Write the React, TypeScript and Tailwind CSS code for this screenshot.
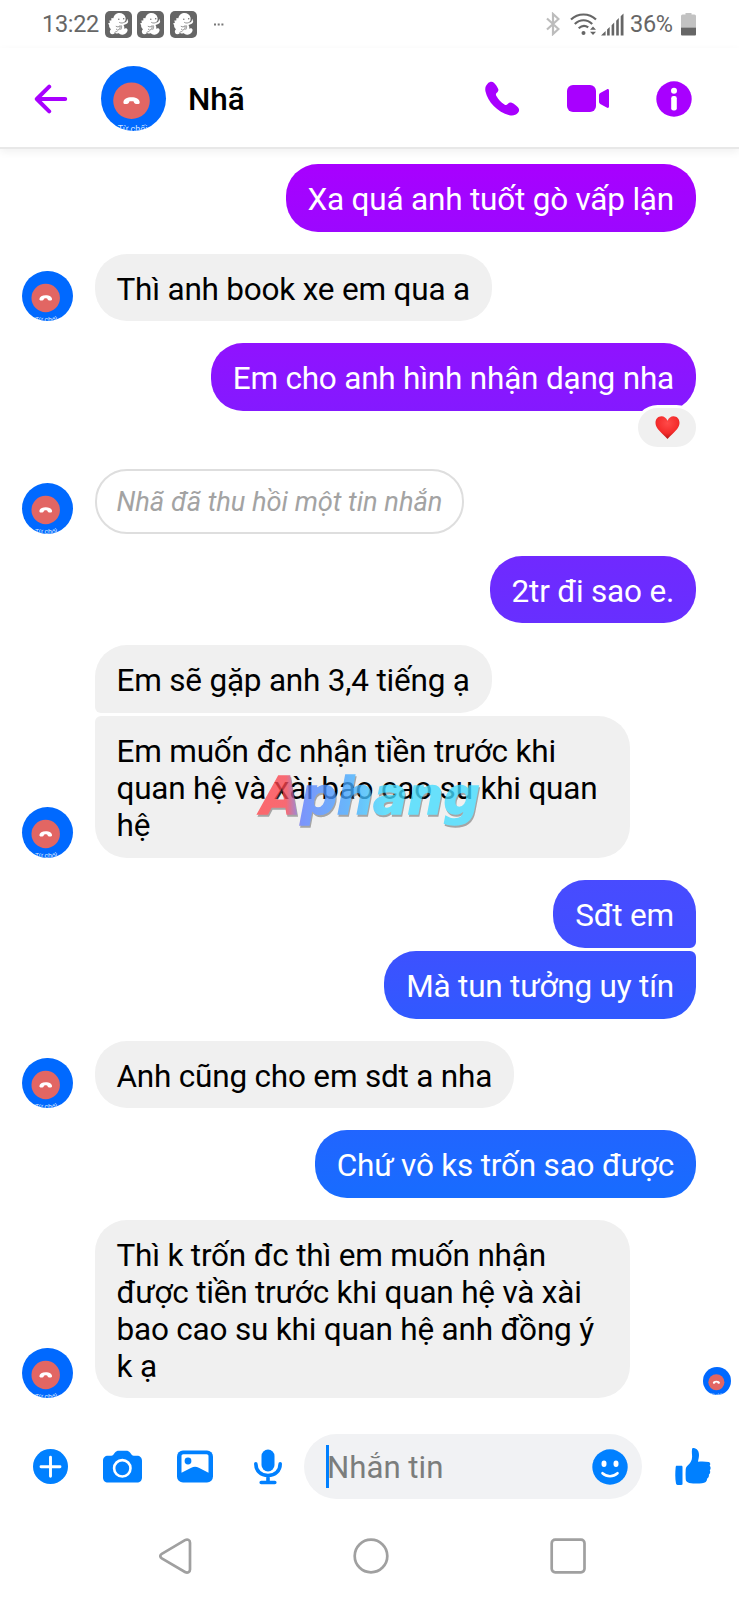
import React from "react";

function Avatar({ className }: { className: string }) {
  return (
    <svg viewBox="0 0 65 65" className={`shrink-0 overflow-hidden rounded-full bg-[#0069ff] ${className}`}>
      <circle cx="30.5" cy="34.7" r="18.3" fill="#e26663" />
      <path
        d="M22.400 36.200c.3-3.200 3.500-4.900 8.100-4.900s7.900 1.700 8.200 4.900c.1 1.400-.9 2-2.500 1.900-2-.1-3-.6-3.300-1.800-.1-.6-.3-.9-.8-1-1.200-.2-2.100-.2-3.200 0-.5.1-.7.400-.8 1-.3 1.200-1.300 1.700-3.300 1.800-1.600.1-2.500-.5-2.400-1.900z"
        fill="#fff"
      />
      <text x="16.800" y="66" fontSize="9" fill="#d8e8ff" fontFamily="Roboto, sans-serif">Từ chối</text>
    </svg>
  );
}

function DinoIcon() {
  return (
    <svg viewBox="0 0 27 27" className="h-[27px] w-[27px]">
      <rect width="27" height="27" rx="5" fill="#666" />
      <path
        d="M12.500 2.300c3.600-1 7.200.8 8 4.200.4 2-.1 4-1.500 5.300 1.200-.1 2-.6 2.500-1.500l.8-2.500.9 3c-.4 1.500-1.500 2.400-3.200 2.700l-1.500.5c.8 1.200 1 2.400.7 3.800 1.200-.9 2.800-.6 3.300.7.5 2-1.500 4.300-4 5-2 .5-3.700 0-4.700-1.200-1.300.3-2.700.1-3.800-.4-1.500 1.500-3.700 1.700-4.700.3-.9-1.500-.4-2.900.7-3.900-1.500-1-2.100-2.500-1.900-4.200L3 12.600l1.900-.8-.6-2.300 2-.1.100-2.300 1.900.1c.6-2.500 2-4.300 4.200-4.900z"
        fill="#fff"
      />
      <circle cx="13.800" cy="8.200" r=".7" fill="#666" />
      <circle cx="18.700" cy="7.800" r=".7" fill="#666" />
      <path d="M14.200 11.300c2 1.200 4 .9 5.500-.5M10.800 15.200l2.200.8 2.300-1.300-.4 3.200-2.200 1.300-1.700-1.300M16.500 14.500c.3 1.500 0 3-.9 4.300M9.500 21.800c.8-1 1.600-1.400 2.800-1.200" fill="none" stroke="#666" strokeWidth=".7" />
    </svg>
  );
}

function StatusBar() {
  return (
    <div className="flex h-[48px] items-center pl-[42px] pr-[43px] text-[23.500px] tracking-[-0.3px] text-[#666]">
      <span className="w-[63px] pt-[1px]">13:22</span>
      <div className="flex gap-[5.400px]">
        <DinoIcon />
        <DinoIcon />
        <DinoIcon />
      </div>
      <svg viewBox="0 0 10 3" className="ml-[17px] h-[3px] w-[10px]" fill="#777">
        <rect width="2" height="2" y=".5" />
        <rect x="3.700" width="2" height="2" y=".5" />
        <rect x="7.400" width="2" height="2" y=".5" />
      </svg>
      <div className="ml-auto flex items-center">
        <svg viewBox="0 0 14 24" className="mr-[10px] h-[24px] w-[14px]" fill="none" stroke="#bcbcbc" strokeWidth="2.200">
          <path d="M1 6.500 12.500 17 7 22V2l5.500 5L1 17.500" />
        </svg>
        <svg viewBox="0 0 27 24" className="mr-[4px] h-[24px] w-[27px]" fill="none" stroke="#666" strokeWidth="2.200">
          <path d="M1 7.500C8 .8 19 .8 26 7.500M4.800 12C10 7 17 7 22.200 12M8.700 16.200c3-2.700 6.700-3 9.500-.8" />
          <circle cx="13.500" cy="21" r="2" fill="#666" stroke="none" />
          <path d="m20 17.800 3-3.300 3 3.300zM20 19.700l3 3.300 3-3.300z" fill="#666" stroke="none" />
        </svg>
        <svg viewBox="0 0 23 23" className="mr-[6px] h-[23px] w-[23px]" fill="#666">
          <path d="M0 22.500 4.600 18v4.500zM6.100 16.600l2.600-2.600v8.500H6.100zM10.600 12.200l2.600-2.600v12.900h-2.600zM15.200 7.700l2.600-2.600v17.400h-2.600zM19.700 3.300 22.500.500v22h-2.800z" />
        </svg>
        <span className="w-[43px] whitespace-nowrap pt-[1px]">36%</span>
        <svg viewBox="0 0 15 23" className="ml-[8px] h-[23px] w-[15px]">
          <path d="M4.500 0h6v1.500H13.500a1.500 1.500 0 0 1 1.500 1.500V14.500H0V3a1.500 1.500 0 0 1 1.500-1.500h3z" fill="#c2c2c2" />
          <path d="M0 14.500h15V21.500a1 1 0 0 1-1 1H1a1 1 0 0 1-1-1z" fill="#666" />
        </svg>
      </div>
    </div>
  );
}

function Header() {
  return (
    <header className="relative z-10 flex h-[101px] items-center border-b-2 border-[#e8e8e8] bg-white pl-[34px] pr-[47px] pt-[2px] shadow-[0_3px_8px_rgba(0,0,0,0.06)]">
      <svg viewBox="0 0 34 30" className="h-[30px] w-[34px]" fill="none" stroke="#a800ff" strokeWidth="4" strokeLinecap="round" strokeLinejoin="round">
        <path d="M31.200 15H3M15.200 2.700 2.800 15l12.400 12.300" />
      </svg>
      <Avatar className="ml-[33px] h-[65px] w-[65px]" />
      <h1 className="ml-[22px] pt-[3px] text-[31.500px] font-medium leading-none text-black">Nhã</h1>
      <svg viewBox="0 0 35 35" className="ml-auto h-[35px] w-[35px]" fill="#a800ff">
        <path d="M3 2.200C4.800.4 7.300.2 8.900 1.700c1.900 1.800 3.500 4.200 4.300 6.200.6 1.600-.3 2.800-1.400 3.900-1 1-1.200 1.900-.4 3.200 2 3.500 4.500 6.200 8 8.400 1.400.9 2.300.6 3.300-.4 1.200-1.200 2.400-1.900 4-1.200 2.300 1 4.500 2.600 6.400 4.600 1.400 1.500 1.300 3.700-.1 5.300-2.100 2.500-5 3.300-8.700 2.500C12.500 31.300 2.600 20.500.5 10.500-.2 7 .5 4.700 3 2.200z" />
      </svg>
      <svg viewBox="0 0 42 27" className="ml-[47px] h-[27px] w-[42px]" fill="#a800ff">
        <rect width="29" height="27" rx="6" />
        <path d="M32 10.500c0-1.300.6-2.100 1.700-2.700l6-3.400c1.300-.7 2.300-.2 2.300 1.300v15.600c0 1.500-1 2-2.300 1.300l-6-3.400c-1.100-.6-1.700-1.400-1.700-2.700z" />
      </svg>
      <svg viewBox="0 0 36 36" className="ml-[47px] h-[36px] w-[36px]">
        <circle cx="18" cy="18" r="17.700" fill="#a800ff" />
        <circle cx="18" cy="9.700" r="3" fill="#fff" />
        <rect x="15.200" y="15" width="5.600" height="14.500" rx="2.300" fill="#fff" />
      </svg>
    </header>
  );
}

function Sent({ children, className }: { children: React.ReactNode; className: string }) {
  return (
    <div className={`relative mr-[43px] self-end whitespace-nowrap rounded-[32px] bg-linear-to-b px-[22px] pb-[13.500px] pt-[17px] text-white ${className}`}>
      {children}
    </div>
  );
}

function Received({ children, avatar = true, className = "", seen = false }: { children: React.ReactNode; avatar?: boolean; className?: string; seen?: boolean }) {
  return (
    <div className="flex items-end">
      <div className="w-[72.500px] shrink-0 pl-[22px]">{avatar && <Avatar className="h-[50.500px] w-[50.500px]" />}</div>
      <div className={`relative ml-[22px] whitespace-nowrap rounded-[32px] bg-[#f0f0f0] px-[22px] pb-[13.500px] pt-[17px] text-black ${className}`}>{children}</div>
      {seen && <Avatar className="mb-[3px] ml-auto mr-[8px] h-[28.500px] w-[28.500px]" />}
    </div>
  );
}

function Composer() {
  return (
    <div className="mt-[36px] flex h-[64.500px] items-center pl-[33px]">
      <svg viewBox="0 0 35 35" className="h-[35px] w-[35px]">
        <circle cx="17.500" cy="17.500" r="17.500" fill="#0080ff" />
        <path d="M17.500 8.300v19M8 17.800h19" stroke="#fff" strokeWidth="2.900" strokeLinecap="round" />
      </svg>
      <svg viewBox="0 0 39 33" className="ml-[35px] h-[33px] w-[39px]">
        <path d="M12 2.500C13 1.200 14.200.700 15.700.700h7.600c1.500 0 2.700.5 3.700 1.800l1.700 2.200c.6.700 1.200 1 2.100 1H34c3 0 5 2 5 5v16.800c0 3-2 5-5 5H5c-3 0-5-2-5-5V10.700c0-3 2-5 5-5h3.200c.9 0 1.500-.3 2.100-1z" fill="#0080ff" />
        <circle cx="19.300" cy="18.300" r="8.200" fill="none" stroke="#fff" strokeWidth="2.600" />
      </svg>
      <svg viewBox="0 0 36 33" className="ml-[35px] h-[33px] w-[36px]">
        <rect y=".5" width="36" height="32" rx="6" fill="#0080ff" />
        <path d="M4.500 6.200C4.500 5 5.200 4.300 6.400 4.300h23.200c1.200 0 1.900.7 1.900 1.900v16.500l-9.700-5c-2.500-1.300-5-1.300-7.500 0l-9.800 5z" fill="#fff" />
        <circle cx="11" cy="11" r="3.400" fill="#0080ff" />
      </svg>
      <svg viewBox="0 0 28 36" className="ml-[40.500px] h-[36px] w-[28px]">
        <rect x="7.500" y=".5" width="13" height="22" rx="6.500" fill="#0080ff" />
        <path d="M1.800 14.800c0 7 5 11.700 12.200 11.700s12.200-4.700 12.200-11.700M14 27v6.500M7.200 33.500h13.600" fill="none" stroke="#0080ff" strokeWidth="3.600" strokeLinecap="round" />
      </svg>
      <div className="ml-[22.500px] flex h-[64.500px] w-[338px] items-center rounded-full bg-[#f1f2f4] pl-[22px] pr-[14px] text-[31.200px] text-[#7b7d7c]">
        <span className="h-[43px] w-[3px] bg-[#0080ff]" />
        <span className="-ml-[2px] whitespace-nowrap pt-[3.500px]">Nhắn tin</span>
        <svg viewBox="0 0 36 36" className="ml-auto h-[36px] w-[36px]">
          <circle cx="18" cy="18" r="17.700" fill="#0080ff" />
          <ellipse cx="12" cy="14.800" rx="2.500" ry="3.200" fill="#fff" />
          <ellipse cx="24" cy="14.800" rx="2.500" ry="3.200" fill="#fff" />
          <path d="M10.500 24.200c4.500 4 10.500 4 15 0" fill="none" stroke="#fff" strokeWidth="2.600" strokeLinecap="round" />
        </svg>
      </div>
      <svg viewBox="0 0 36 37" className="ml-[33px] h-[37px] w-[36px]" fill="#0080ff">
        <path d="M1.700 17.800h4.600c.8 0 1.200.5 1.200 1.300v16.600c0 .8-.4 1.200-1.200 1.200H2.600c-.9 0-1.400-.4-1.600-1.300-.9-5.400-.9-11-.3-16.500.1-.9.400-1.300 1-1.300zM17 1.500C17.100.500 17.700 0 18.600.100c3.400.4 5.400 3 5.400 6.800 0 2.700-.7 4.400-1 6.800 3.600-.5 7.500-.4 10.700.4 1.600.5 2.100 2.200 1 3.700 1.200 1.400 1.300 3.200.1 4.500.8 1.600.5 3.200-.9 4.300.3 1.700-.2 3-1.700 3.900-.2 3.200-2 4.500-5.200 4.800-4.300.4-8.600.3-12.800-.4-2.300-.4-3.400-1.500-3.500-3.800-.2-3.300-.2-6.500 0-9.700.1-2 1-3.200 2.500-4.500 2.600-2.200 3.800-4.700 3.900-8.200 0-2.500-.5-4.500-.1-7.200z" />
      </svg>
    </div>
  );
}

function NavBar() {
  return (
    <nav className="mt-[39px] flex h-[36px] items-center pl-[158.500px]">
      <svg viewBox="0 0 33 36" className="h-[36px] w-[33px]" fill="none" stroke="#a0a0a0" strokeWidth="2.700" strokeLinejoin="round">
        <path d="M2.800 15.800 26 2.200c2.500-1.400 5-.3 5 2.600v26.600c0 2.900-2.500 4-5 2.600L2.800 20.400c-2-1.200-2-3.400 0-4.600z" />
      </svg>
      <svg viewBox="0 0 36 36" className="ml-[161.500px] h-[36px] w-[36px]" fill="none" stroke="#a0a0a0" strokeWidth="2.700">
        <circle cx="18" cy="18" r="16.300" />
      </svg>
      <svg viewBox="0 0 36 36" className="ml-[161px] h-[36px] w-[36px]" fill="none" stroke="#a0a0a0" strokeWidth="2.700">
        <rect x="1.700" y="1.700" width="32.800" height="32.600" rx="3.500" />
      </svg>
    </nav>
  );
}

export default function App() {
  return (
    <div className="h-[1600px] w-[739px] overflow-hidden bg-white font-['Roboto','Noto_Sans',sans-serif]">
      <StatusBar />
      <Header />
      <main className="flex flex-col gap-[22.100px] pt-[15px] text-[31.500px] leading-[37px] tracking-[-0.200px]">
        <Sent className="from-[#a800ff] to-[#9c07ff]">Xa quá anh tuốt gò vấp lận</Sent>
        <Received>Thì anh book xe em qua a</Received>
        <Sent className="mb-[36px] from-[#9012ff] to-[#8419ff]">
          Em cho anh hình nhận dạng nha
          <span className="absolute -bottom-[39px] -right-[3px] flex h-[45px] w-[64px] items-center justify-center rounded-[23px] border-[3px] border-white bg-[#f0f0f0]">
            <svg viewBox="0 0 25 23" className="h-[23px] w-[25px]">
              <defs>
                <radialGradient id="heart" cx=".5" cy=".3" r=".75">
                  <stop offset="0" stopColor="#ff4a48" />
                  <stop offset=".6" stopColor="#f42b2b" />
                  <stop offset="1" stopColor="#a51413" />
                </radialGradient>
              </defs>
              <path d="M12.500 4.800C11.200 1.800 9.100.3 6.500.3 2.900.3.500 3.100.500 7c0 5.500 6.500 10 12 15.900C18 17 24.500 12.500 24.500 7c0-3.900-2.400-6.700-6-6.700-2.600 0-4.700 1.500-6 4.500z" fill="url(#heart)" />
            </svg>
          </span>
        </Sent>
        <Received className="border-2 border-[#dedede] bg-white! px-[20px]! pb-[11px]! pt-[13px]! text-[27.300px] italic tracking-[-0.050px] text-[#a3a3a3]!">Nhã đã thu hồi một tin nhắn</Received>
        <Sent className="from-[#7029ff] to-[#672fff]">2tr đi sao e.</Sent>
        <div className="flex flex-col gap-[3.500px]">
          <Received avatar={false} className="rounded-bl-[6px]">Em sẽ gặp anh 3,4 tiếng ạ</Received>
          <Received className="w-[535.500px] rounded-tl-[6px]">
            Em muốn đc nhận tiền trước khi
            <br />
            quan hệ và xài bao cao su khi quan
            <br />
            hệ
            <svg viewBox="0 0 230 70" className="absolute left-[161px] top-[48px] h-[70px] w-[230px]" opacity=".78">
              <defs>
                <linearGradient id="brand" x1="0" x2="1" y1="0" y2="0">
                  <stop offset="0" stopColor="#ff4348" />
                  <stop offset=".13" stopColor="#fa4550" />
                  <stop offset=".2" stopColor="#5b7cff" />
                  <stop offset=".4" stopColor="#44a5ff" />
                  <stop offset=".58" stopColor="#43dcff" />
                  <stop offset="1" stopColor="#43dcff" />
                </linearGradient>
              </defs>
              <text
                x="5"
                y="50"
                textLength="219"
                lengthAdjust="spacingAndGlyphs"
                fill="url(#brand)"
                stroke="url(#brand)"
                strokeWidth="1.500"
                letterSpacing="0"
                className="font-['DejaVu_Sans',sans-serif] text-[51px] font-bold italic drop-shadow-[1px_2px_0_rgba(80,80,80,0.6)]"
              >
                Aphang
              </text>
            </svg>
          </Received>
        </div>
        <div className="flex flex-col gap-[3.500px]">
          <Sent className="rounded-br-[6px] from-[#484bff] to-[#404fff]">Sđt em</Sent>
          <Sent className="rounded-tr-[6px] from-[#3d51ff] to-[#3059ff]">Mà tun tưởng uy tín</Sent>
        </div>
        <Received>Anh cũng cho em sdt a nha</Received>
        <Sent className="from-[#2165ff] to-[#176cff]">Chứ vô ks trốn sao được</Sent>
        <Received seen className="w-[535.500px]">
          Thì k trốn đc thì em muốn nhận
          <br />
          được tiền trước khi quan hệ và xài
          <br />
          bao cao su khi quan hệ anh đồng ý
          <br />k ạ
        </Received>
      </main>
      <Composer />
      <NavBar />
    </div>
  );
}
